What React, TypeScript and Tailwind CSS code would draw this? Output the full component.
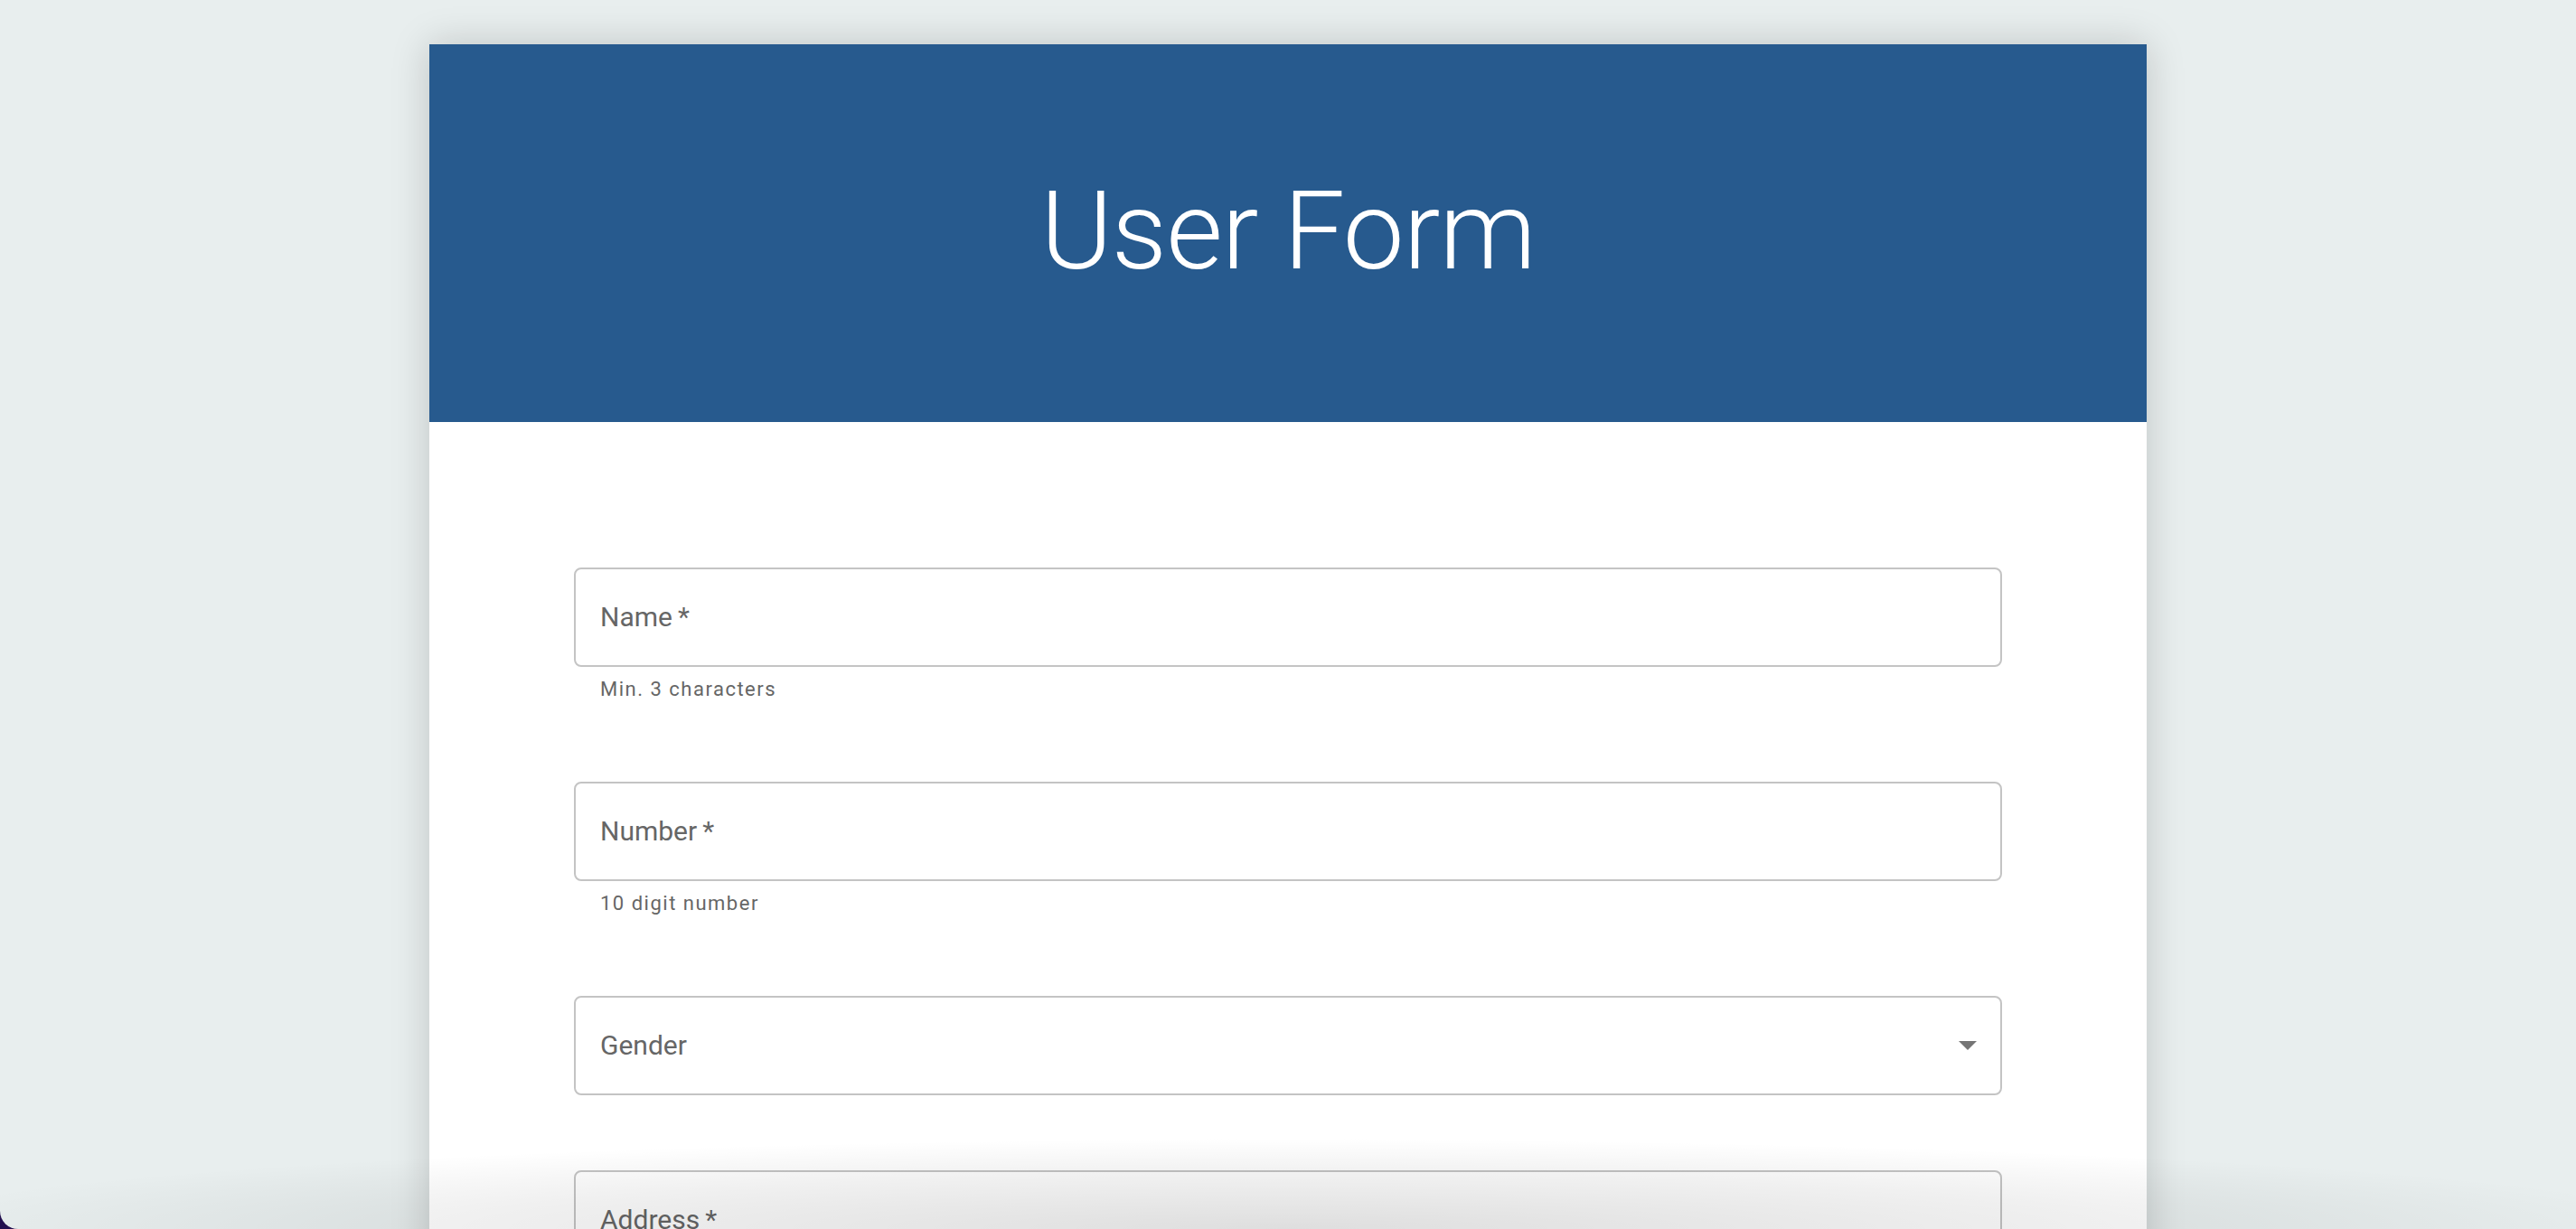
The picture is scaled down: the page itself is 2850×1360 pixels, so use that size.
import React from "react";

function Field({ label, required, helper, select }: { label: string; required?: boolean; helper?: string; select?: boolean }) {
  return (
    <div className="mb-[83px]">
      <div className="flex h-[110px] items-center justify-between rounded-[8px] border-2 border-[#c4c4c4] bg-white pl-[27px] pr-[25px]">
        <span className="text-[30px] leading-none text-[#666666]">
          {label}
          {required ? <span className="ml-[6px]">*</span> : null}
        </span>
        {select ? (
          <svg width="22" height="12" viewBox="0 0 22 12">
            <polygon points="1,1 21,1 11,11" fill="#757575" />
          </svg>
        ) : null}
      </div>
      {helper ? (
        <div className="mt-[6px] pl-[29px] text-[22px] leading-[38px] tracking-[1.5px] text-[#666666]">{helper}</div>
      ) : null}
    </div>
  );
}

export default function App() {
  return (
    <div className="h-[1360px] w-full bg-[#23104f]" style={{ fontFamily: "Roboto, 'Liberation Sans', sans-serif" }}>
      <div className="relative h-[1360px] w-full overflow-hidden rounded-bl-[20px] bg-[#e8eeee]">
        <div className="mx-auto mt-[49px] w-[1900px] bg-white shadow-[0_0_40px_rgba(0,0,0,0.18)]">
          <div className="flex h-[418px] items-center justify-center bg-[#275a8e]">
            <h1 className="pb-[4px] text-[121px] font-light leading-none tracking-[-1px] text-white">User Form</h1>
          </div>
          <div className="px-[160px] pt-[161px]">
            <Field label="Name" required helper="Min. 3 characters" />
            <Field label="Number" required helper="10 digit number" />
            <Field label="Gender" select />
            <Field label="Address" required />
          </div>
        </div>
        <div className="pointer-events-none absolute inset-x-0 bottom-0 h-[100px] bg-[radial-gradient(ellipse_55%_100%_at_50%_100%,rgba(0,0,0,0.13),rgba(0,0,0,0.06)_60%,transparent_100%)]" />
      </div>
    </div>
  );
}
